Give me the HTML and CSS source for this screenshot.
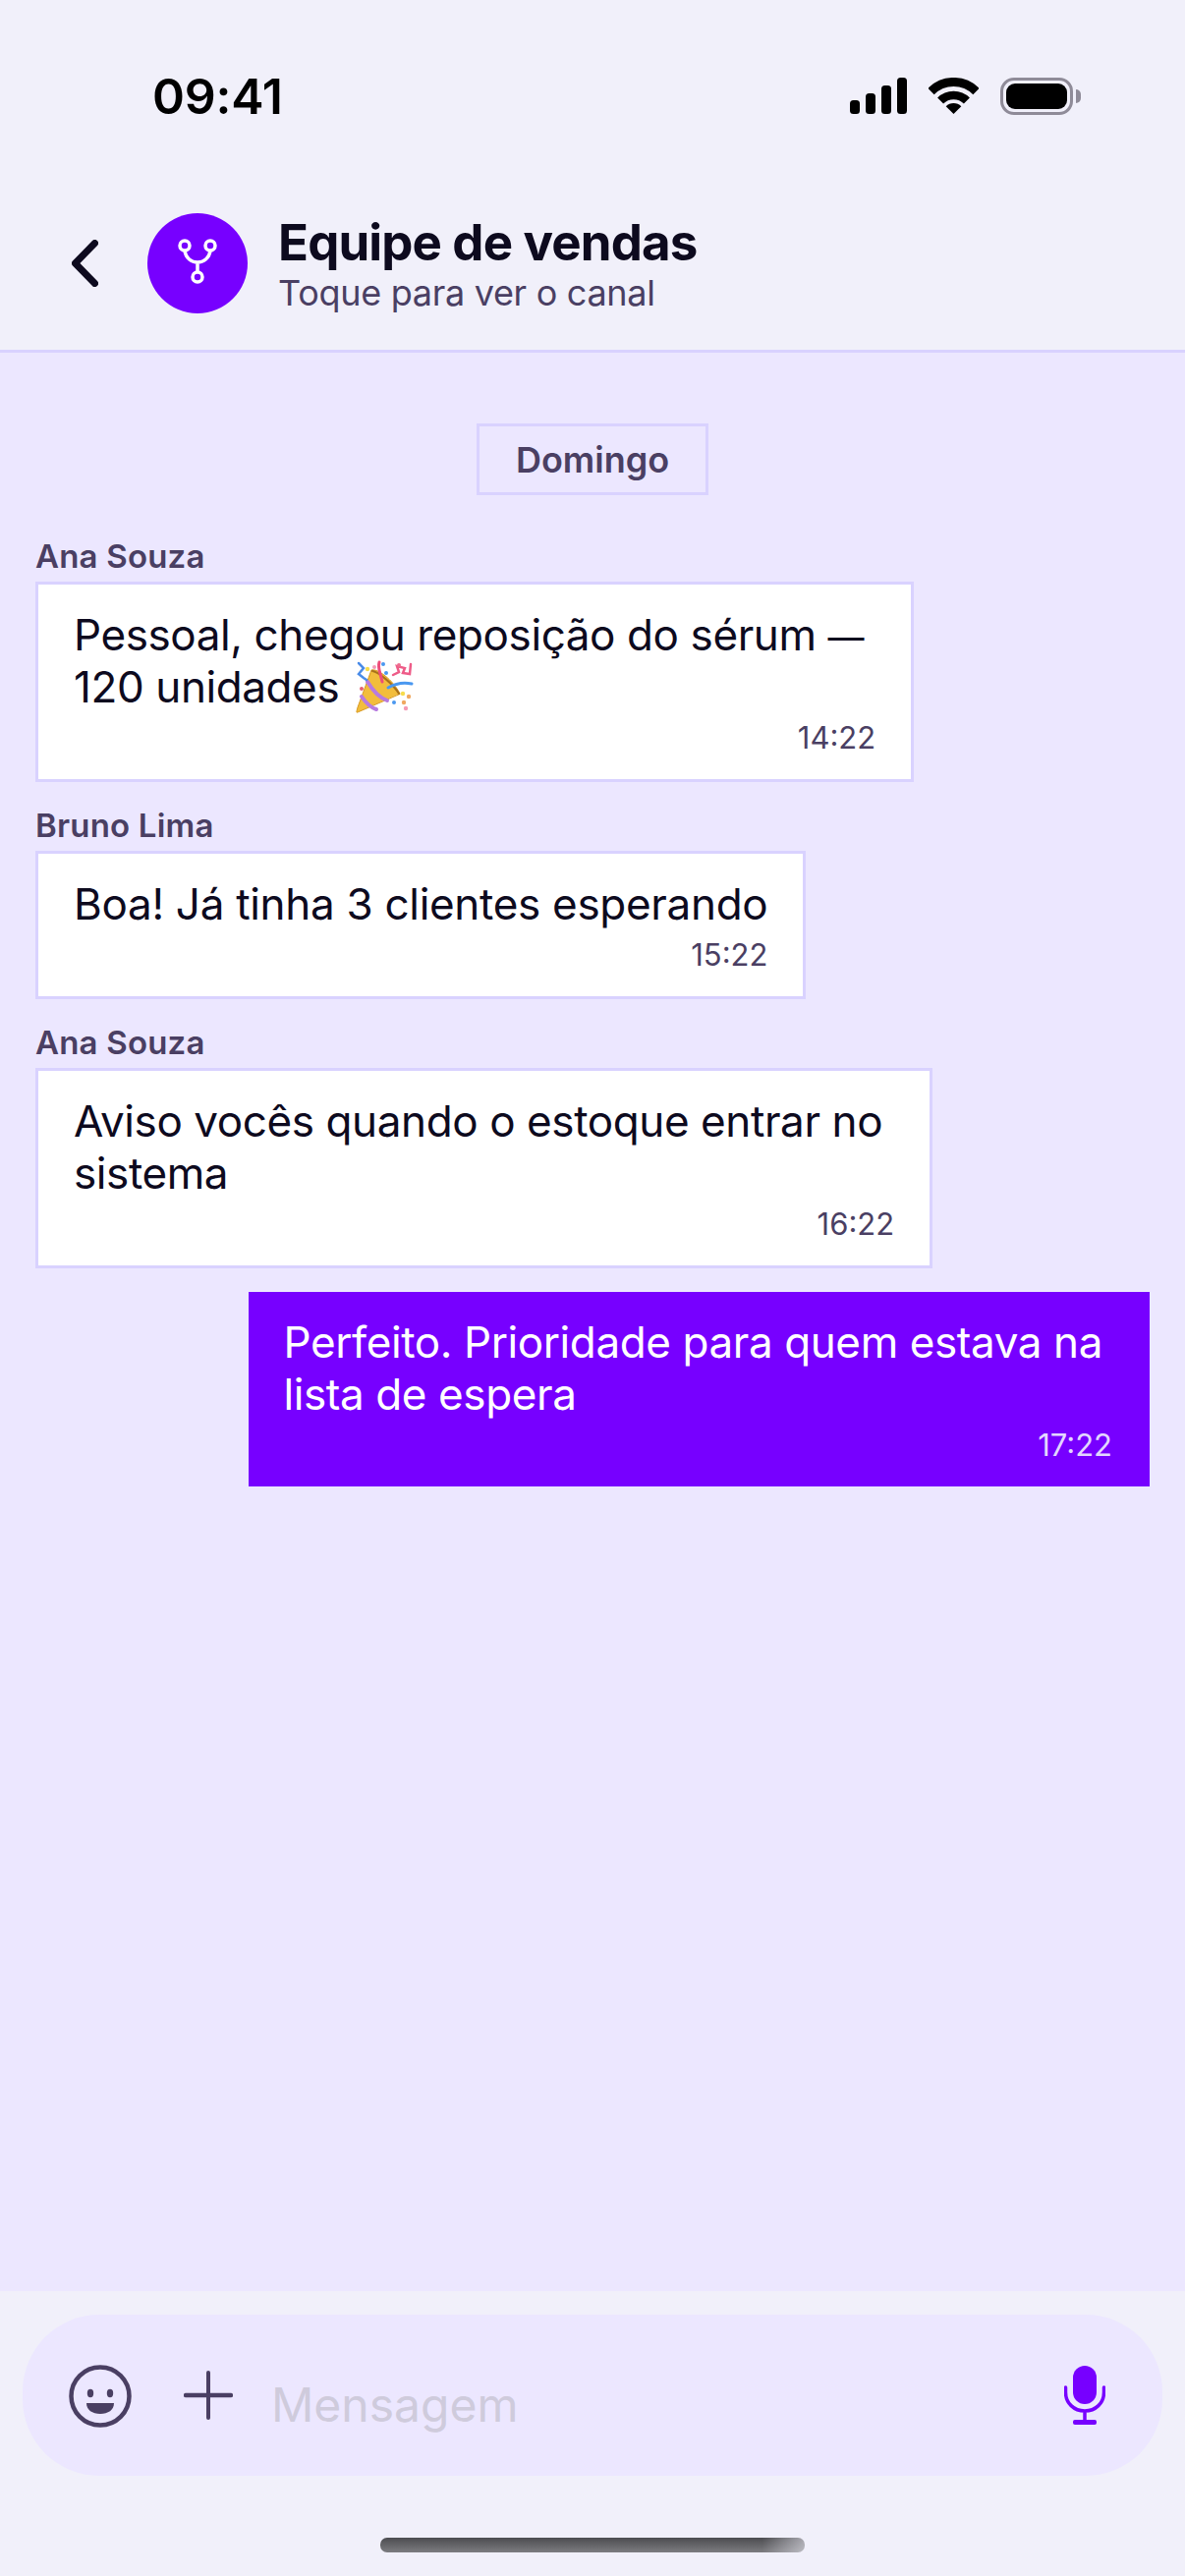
FILE: index.html
```html
<!DOCTYPE html>
<html lang="pt-BR">
<head>
  <meta charset="UTF-8"/>
  <title>Equipe de vendas</title>
  <link rel="stylesheet" href="styles.css">
</head>
<body>

<div class="app">
  <header class="top">
    <div class="status-bar">
      <span class="clock">09:41</span>
      <div class="status-icons">
        <svg class="signal" width="58" height="37" viewBox="0 0 58 37" fill="#000">
          <rect x="0" y="23" width="10" height="14" rx="3.5"/>
          <rect x="16" y="16" width="10" height="21" rx="3.5"/>
          <rect x="32" y="8" width="10" height="29" rx="3.5"/>
          <rect x="48" y="0" width="10" height="37" rx="3.5"/>
        </svg>
        <svg class="wifi" width="51" height="37" viewBox="0 0 51 37" fill="none" stroke="#000">
          <path d="M2.5 14A32.5 32.5 0 0 1 48.5 14" stroke-width="9"/>
          <path d="M12.1 23.6A19 19 0 0 1 38.9 23.6" stroke-width="8.5"/>
          <path d="M25.5 37L17.7 29.2A11 11 0 0 1 33.3 29.2Z" fill="#000" stroke="none"/>
        </svg>
        <div class="battery"><div class="battery-level"></div></div>
      </div>
    </div>

    <div class="nav">
      <svg class="back" width="27" height="48" viewBox="0 0 27 48" fill="none" stroke="#0d0a1e" stroke-width="7" stroke-linecap="round" stroke-linejoin="round">
        <path d="M23.5 3.5L3.5 24L23.5 44.5"/>
      </svg>
      <div class="avatar">
        <svg width="40" height="50" viewBox="0 0 40 50" fill="none" stroke="#fff" stroke-width="3.5">
          <circle cx="7" cy="7" r="5"/>
          <circle cx="33" cy="7" r="5"/>
          <circle cx="20" cy="39" r="5"/>
          <path d="M7 12C8 20 14 24 20 24C26 24 32 20 33 12M20 24V34"/>
        </svg>
      </div>
      <div class="nav-text">
        <div class="channel">Equipe de vendas</div>
        <div class="channel-hint">Toque para ver o canal</div>
      </div>
    </div>
  </header>

  <main class="chat">
    <div class="date-chip">Domingo</div>

    <!-- mensagens -->
    <div class="group">
      <div class="sender">Ana Souza</div>
      <div class="bubble">
        <div class="bubble-text wrapped">Pessoal, chegou reposição do sérum <span class="dash">—</span><br/>120 unidades
          <svg class="party" width="60" height="56" viewBox="0 0 60 56" fill="none" stroke-linecap="round">
            <path d="M2 53C0 54 1 52 2 48L16 10C22 8 38 20 45 34Z" fill="#f2bd3c" stroke="#d89a22" stroke-width="1"/>
            <path d="M12 22C18 32 24 38 32 41" stroke="#b77be0" stroke-width="4"/>
            <path d="M6 37C10 43 15 48 21 50" stroke="#b77be0" stroke-width="4"/>
            <path d="M17 11C23 12 38 24 44 34" stroke="#a8701a" stroke-width="2"/>
            <path d="M3 3L8 8L3 14L8 18L11 20" stroke="#4a8ce8" stroke-width="2.5"/>
            <path d="M24 2C22 8 25 12 27 22" stroke="#ee4c7a" stroke-width="3"/>
            <path d="M38 15L44 12L42 6L50 8L48 13L55 14L56 4" stroke="#ee5c88" stroke-width="2.5"/>
            <path d="M33 28C40 24 48 22 57 24" stroke="#4a98f0" stroke-width="3"/>
            <g stroke="none">
              <circle cx="12" cy="9" r="2.2" fill="#f7dc4c"/>
              <circle cx="19" cy="7" r="2" fill="#f49ab5"/>
              <circle cx="28" cy="4" r="2" fill="#4a98f0"/>
              <circle cx="31" cy="13" r="2" fill="#4a98f0"/>
              <circle cx="44" cy="5" r="2" fill="#ee6c8e"/>
              <circle cx="6" cy="29" r="2" fill="#e46070"/>
              <circle cx="48" cy="34" r="2.2" fill="#f7dc4c"/>
              <circle cx="54" cy="37" r="2.2" fill="#f0a860"/>
              <circle cx="39" cy="43" r="2" fill="#4a98f0"/>
              <circle cx="49" cy="43" r="2.2" fill="#f0a860"/>
              <circle cx="51" cy="49" r="2.2" fill="#f49ab5"/>
            </g>
          </svg>
        </div>
        <div class="time">14:22</div>
      </div>
    </div>

    <div class="group">
      <div class="sender">Bruno Lima</div>
      <div class="bubble">
        <div class="bubble-text">Boa! Já tinha 3 clientes esperando</div>
        <div class="time">15:22</div>
      </div>
    </div>

    <div class="group">
      <div class="sender">Ana Souza</div>
      <div class="bubble">
        <div class="bubble-text wrapped">Aviso vocês quando o estoque entrar no<br/>sistema</div>
        <div class="time">16:22</div>
      </div>
    </div>

    <div class="group group-mine">
      <div class="bubble bubble-mine">
        <div class="bubble-text wrapped">Perfeito. Prioridade para quem estava na<br/>lista de espera</div>
        <div class="time">17:22</div>
      </div>
    </div>
  </main>

  <footer class="bottom">
    <div class="composer">
      <svg class="smile" width="64" height="64" viewBox="0 0 64 64">
        <circle cx="32" cy="32" r="29.5" fill="none" stroke="#4a3f63" stroke-width="4.5"/>
        <ellipse cx="22" cy="29" rx="3.2" ry="4.2" fill="#4a3f63"/>
        <ellipse cx="42" cy="29" rx="3.2" ry="4.2" fill="#4a3f63"/>
        <path d="M18 39H46C46 46 40 50 32 50C24 50 18 46 18 39Z" fill="#4a3f63"/>
      </svg>
      <svg class="plus" width="50" height="50" viewBox="0 0 50 50" stroke="#4a3f63" stroke-linecap="round">
        <path d="M25 2V48" stroke-width="4"/>
        <path d="M2 25H48" stroke-width="4.5"/>
      </svg>
      <div class="placeholder">Mensagem</div>
      <svg class="mic" width="42" height="60" viewBox="0 0 42 60">
        <rect x="9" y="0" width="24" height="39" rx="12" fill="#7700ff"/>
        <path d="M1.5 22V27C1.5 38 10 46 21 46C32 46 40.5 38 40.5 27V22M21 46V57" fill="none" stroke="#7700ff" stroke-width="3.5" stroke-linecap="round"/>
        <rect x="9" y="55" width="24" height="5" rx="2" fill="#7700ff"/>
      </svg>
    </div>
    <div class="home-bar"></div>
  </footer>
</div>

</body>
</html>
```

FILE: styles.css
```css
body {
  margin: 0;
  font-family: Inter, "Liberation Sans", sans-serif;
  color: #0d0a1e;
  background-color: #ece7ff;
}
.app {
  height: 2622px;
  display: flex;
  flex-direction: column;
  overflow: hidden;
}

/* topo */
.top {
  background: #f1f0fa;
  border-bottom: 3px solid #d9d2ff;
}
.status-bar {
  height: 196px;
  box-sizing: border-box;
  padding: 70px 114px 0 155px;
  display: flex;
  justify-content: space-between;
  align-items: flex-start;
}
.clock {
  font-size: 50px;
  font-weight: 600;
  line-height: 56px;
  letter-spacing: -0.2px;
  color: #000;
}
.status-icons {
  display: flex;
  align-items: flex-start;
  gap: 22px;
  padding-top: 9px;
}
.battery {
  position: relative;
  width: 74px;
  height: 38px;
  box-sizing: border-box;
  border: 3px solid #8f8b98;
  border-radius: 14px;
  padding: 3px;
}
.battery::after {
  content: "";
  position: absolute;
  right: -11px;
  top: 9px;
  width: 5px;
  height: 14px;
  background: #8f8b98;
  border-radius: 0 5px 5px 0;
}
.battery-level {
  height: 100%;
  background: #000;
  border-radius: 9px;
}
.nav {
  display: flex;
  align-items: center;
  padding: 21px 0 37px 73px;
}
.back {
  margin-right: 50px;
}
.avatar {
  width: 102px;
  height: 102px;
  border-radius: 50%;
  background: #7700ff;
  display: flex;
  align-items: center;
  justify-content: center;
  margin-right: 31px;
}
.channel {
  font-size: 51px;
  font-weight: 700;
  line-height: 60px;
  letter-spacing: -0.85px;
}
.channel-hint {
  font-size: 36px;
  line-height: 42px;
  letter-spacing: -0.3px;
  color: #4a3f63;
}

/* conversa */
.chat {
  flex: 1;
  padding: 72px 36px 0;
  display: flex;
  flex-direction: column;
}
.date-chip {
  align-self: center;
  width: 236px;
  height: 73px;
  box-sizing: border-box;
  border: 3px solid #d9d2ff;
  display: flex;
  align-items: center;
  justify-content: center;
  font-size: 36px;
  font-weight: 600;
  color: #4a3f63;
  margin-bottom: 18px;
}
.group {
  margin-top: 24px;
  display: flex;
  flex-direction: column;
  align-items: flex-start;
}
.group-mine {
  align-items: flex-end;
}
.sender {
  font-size: 33px;
  font-weight: 600;
  line-height: 40px;
  letter-spacing: 0.2px;
  margin-bottom: 6px;
  color: #4a3f63;
}
.bubble {
  background: #fff;
  border: 3px solid #d9d2ff;
  padding: 25px 36px 24px;
}
.bubble-mine {
  background: #7700ff;
  border: 0;
  padding: 25px 38px 24px 36px;
  color: #fff;
}
.bubble-text {
  font-size: 44px;
  line-height: 53px;
  letter-spacing: -0.3px;
}
.bubble-text.wrapped {
  margin-right: 12px;
  letter-spacing: -0.4px;
}
.bubble-mine .bubble-text.wrapped {
  margin-right: 10px;
}
.dash {
  font-size: 37px;
  line-height: 1;
}
.party {
  vertical-align: 7px;
  margin: -20px 0 -20px 5px;
}
.time {
  margin-top: 7px;
  font-size: 31px;
  line-height: 36px;
  text-align: right;
  color: #4a3f63;
}
.bubble-mine .time {
  color: #e3d6ff;
}

/* rodape */
.bottom {
  height: 290px;
  box-sizing: border-box;
  background: #f1f0fa;
  padding: 24px 23px 0;
}
.composer {
  height: 164px;
  border-radius: 78px;
  background: #ece7ff;
  display: flex;
  align-items: center;
  padding: 0 58px 0 47px;
}
.smile {
  margin: 2px 0 0 0;
}
.plus {
  margin: -1px 0 0 53px;
}
.placeholder {
  flex: 1;
  margin: 18px 0 0 39px;
  font-size: 48px;
  color: #cfcbdc;
}
.home-bar {
  width: 432px;
  height: 15px;
  margin: 63px auto 0;
  border-radius: 7px;
  background: linear-gradient(90deg, transparent 90%, rgba(241,240,250,0.55)), linear-gradient(180deg, #4c4c50, #7c7c80);
}
```
